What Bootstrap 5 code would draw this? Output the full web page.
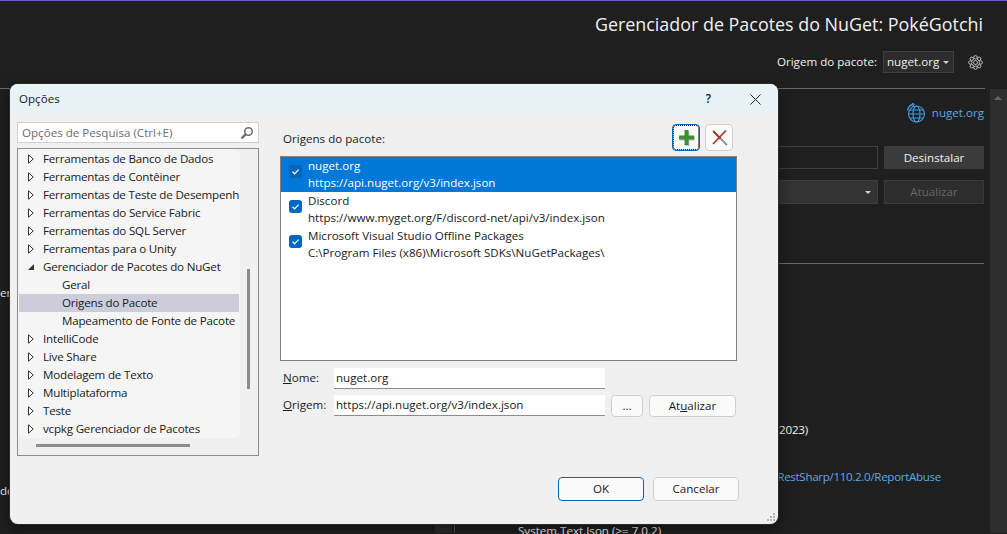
<!DOCTYPE html>
<html lang="pt-BR">
<head>
  <meta charset="UTF-8">
  <meta name="viewport" content="width=device-width, initial-scale=1">
  <title>Opções - Origens do Pacote</title>
  <link href="https://cdn.jsdelivr.net/npm/bootstrap@5.3.3/dist/css/bootstrap.min.css" rel="stylesheet">
  <style>
    html, body {
      height: 534px;
      overflow: hidden;
    }

    body {
      background-color: #1f1f1f;
      color: #f1f1f1;
      font-family: "Open Sans", "Liberation Sans", sans-serif;
      font-size: 11.6px;
      line-height: 18px;
      border-top: 1px solid #6a5ccf;
      position: relative;
    }

    /* fundo escuro do VS */
    .vs-header {
      height: 88px;
      border-bottom: 1px solid #6b6b6b;
      margin-right: 22px;
      padding-right: 2px;
    }

    .vs-title {
      font-size: 17.9px;
      line-height: 24px;
      padding-top: 11px;
      height: 50px;
    }

    .vs-origin-select {
      width: 71px;
      height: 22px;
      padding: 0 0 0 3px;
      background-color: #2d2d2d;
      border: 1px solid #3e3e3e;
      margin-left: 6px;
      margin-right: 14px;
    }

    .vs-caret {
      width: 0;
      height: 0;
      border-left: 3px solid transparent;
      border-right: 3px solid transparent;
      border-top: 3px solid #d0d0d0;
    }

    .vs-main {
      height: 444px;
    }

    .vs-left {
      width: 454px;
      flex: none;
    }

    .vs-left-top {
      height: 196px;
      padding-top: 195px;
    }

    .vs-left-mid {
      padding-top: 197px;
      height: 216px;
    }

    .vs-splitter {
      width: 17px;
      height: 32px;
      background-color: #2b2b2b;
      margin-left: 435px;
    }

    .vs-pane {
      flex: 1 1 auto;
      border-left: 1px solid #555;
      padding-right: 6px;
      height: 444px;
    }

    .vs-scroll {
      width: 17px;
      flex: none;
      background-color: #2e2e2e;
      position: relative;
    }

    .vs-scroll::before {
      content: "";
      position: absolute;
      top: 7px;
      left: 4px;
      border-left: 4px solid transparent;
      border-right: 4px solid transparent;
      border-bottom: 4px solid #666;
    }

    .vs-link {
      color: #5aa9e6;
    }

    .vs-pane-link {
      height: 18px;
      margin-top: 15px;
      gap: 6px;
    }

    .vs-row-a {
      margin-top: 24px;
      height: 23px;
      gap: 6px;
    }

    .vs-row-b {
      margin-top: 11px;
      height: 24px;
      gap: 6px;
    }

    .vs-box {
      flex: 1 1 auto;
      border: 1px solid #3e3e3e;
    }

    .vs-box-fill {
      background-color: #333;
      padding-right: 6px;
    }

    .vs-btn {
      width: 100px;
      flex: none;
      padding: 0;
      border-radius: 0;
      font-size: 11.6px;
      background-color: #3b3b3b;
      border: 0;
      color: #f1f1f1;
    }

    .vs-btn-off {
      background-color: #2d2d2d;
      border: 1px solid #383838;
      color: #666;
    }

    .vs-rule {
      border-top: 1px solid #6b6b6b;
      margin-top: 59px;
    }

    .vs-date {
      margin-top: 157px;
      padding-right: 176px;
      letter-spacing: -.2px;
    }

    .vs-report {
      margin-top: 29px;
      padding-right: 43px;
      letter-spacing: -.32px;
    }

    .vs-dep {
      margin-top: 36px;
      padding-left: 63px;
    }

    /* janela de opções */
    .dlg {
      position: absolute;
      left: 10px;
      top: 83px;
      width: 768px;
      height: 440px;
      background-color: #f0f0f0;
      color: #1a1a1a;
      border-radius: 8px;
      box-shadow: 0 0 0 1px #2a2a2a, 0 4px 14px rgba(0, 0, 0, .5);
      overflow: hidden;
    }

    .dlg-titlebar {
      height: 30px;
      background-color: #e8f3f7;
      padding: 0 17px 0 9px;
    }

    .dlg-help {
      margin-right: 39px;
      font-weight: 600;
    }

    .dlg-body {
      padding: 8px 41px 0 7px;
    }

    .dlg-left {
      width: 242px;
      flex: none;
    }

    .dlg-search {
      height: 21px;
      background-color: #fff;
      border: 1px solid #d0d0d0;
      padding: 0 4px;
      color: #6d6d6d;
    }

    .dlg-tree {
      height: 308px;
      margin-top: 5px;
      border: 1px solid #8c8c8c;
      background-color: #f0f0f0;
      position: relative;
    }

    .dlg-tree-list {
      width: 222px;
      height: 289px;
      background-color: #f5f5f5;
      overflow: hidden;
      padding: 1px 1px 0 1px;
      letter-spacing: -.2px;
    }

    .dlg-tree-item {
      height: 18px;
      flex: none;
      line-height: 18px;
      white-space: nowrap;
      overflow: hidden;
      padding: 0 0 1px 9px;
      gap: 5px;
    }

    .dlg-tree-sub {
      padding-left: 43px;
    }

    .dlg-tree-item.is-selected {
      background-color: #cbcdda;
    }

    .dlg-vbar {
      position: absolute;
      left: 229px;
      top: 120px;
      width: 3px;
      height: 120px;
      background-color: #8c8c8c;
    }

    .dlg-hbar {
      position: absolute;
      left: 18px;
      top: 295px;
      width: 154px;
      height: 3px;
      background-color: #8c8c8c;
    }

    .dlg-right {
      margin-left: 21px;
      flex: 1 1 auto;
    }

    .dlg-sources-head {
      height: 34px;
      padding-left: 3px;
    }

    .dlg-icon-btn {
      width: 28px;
      height: 27px;
      padding: 0;
      background-color: #fbfbfb;
      border: 1px solid #d0d0d0;
      border-radius: 4px;
    }

    .dlg-icon-btn.is-focus {
      border: 1px solid #0067c0;
      outline: 1px dotted #000;
      outline-offset: -2px;
    }

    .dlg-icons {
      gap: 5px;
      margin: 2px 4px 0 0;
    }

    .dlg-sources {
      height: 205px;
      background-color: #fff;
      border: 1px solid #7f7f7f;
      border-radius: 0;
    }

    .dlg-source {
      height: 35px;
      line-height: 17px;
      padding: 0 0 2px 8px;
      border: 0;
      border-radius: 0;
      gap: 6px;
      color: #1a1a1a;
      background: transparent;
    }

    .dlg-source.is-selected {
      background-color: #0078d7;
      color: #fff;
    }

    .dlg-check {
      width: 13px;
      height: 13px;
      flex: none;
      margin-bottom: 4px;
      background-color: #0067c0;
      border-radius: 3px;
    }

    .dlg-source.is-selected .dlg-check {
      background-color: #0a65b8;
    }

    .dlg-field {
      height: 21px;
      margin-top: 6px;
      padding-left: 3px;
    }

    .dlg-field-first {
      margin-top: 7px;
    }

    .dlg-label {
      width: 51px;
      flex: none;
      margin-bottom: 1px;
    }

    .dlg-input {
      width: 271px;
      height: 21px;
      flex: none;
      padding: 0 2px 2px;
      font-size: 11.6px;
      line-height: 18px;
      background-color: #fff;
      border: 0;
      border-bottom: 1px solid #8c8c8c;
      border-radius: 0;
      color: #1a1a1a;
    }

    .dlg-btn {
      height: 22px;
      padding: 0;
      font-size: 11.6px;
      line-height: 18px;
      background-color: #fbfbfb;
      border: 1px solid #d0d0d0;
      border-radius: 4px;
      color: #1a1a1a;
    }

    .dlg-btn-dots {
      width: 32px;
      margin-left: 6px;
    }

    .dlg-btn-update {
      width: 87px;
      margin-left: 6px;
    }

    .dlg-footer {
      position: absolute;
      right: 39px;
      bottom: 23px;
      gap: 9px;
    }

    .dlg-btn-main {
      width: 86px;
      height: 24px;
    }

    .dlg-btn-ok {
      border-color: #0067c0;
    }

    .dlg-grip {
      position: absolute;
      right: 2px;
      bottom: 2px;
    }
  </style>
</head>
<body>

  <svg width="0" height="0" class="position-absolute">
    <symbol id="seta" viewBox="0 0 6 10">
      <path d="M.5.8 5.2 5 .5 9.2Z" fill="#fff" stroke="#333" stroke-width="1"/>
    </symbol>
    <symbol id="visto" viewBox="0 0 13 13">
      <path d="M3.500 6.800 5.600 8.800 9.600 4.600" fill="none" stroke="#fff" stroke-width="1.200"/>
    </symbol>
  </svg>

  <!-- Fundo: gerenciador de pacotes -->
  <header class="vs-header">
    <div class="vs-title text-end">Gerenciador de Pacotes do NuGet: PokéGotchi</div>
    <div class="d-flex justify-content-end align-items-center">
      <span>Origem do pacote:</span>
      <span class="vs-origin-select d-flex align-items-center justify-content-between">nuget.org<span class="vs-caret me-1"></span></span>
      <svg width="15" height="15" viewBox="0 0 15 15" fill="none" stroke="#c8c8c8" stroke-width=".9">
        <circle cx="7.500" cy="7.500" r="2"/>
        <circle cx="7.500" cy="2.300" r="1.700"/><circle cx="7.500" cy="12.700" r="1.700"/>
        <circle cx="2.300" cy="7.500" r="1.700"/><circle cx="12.700" cy="7.500" r="1.700"/>
        <circle cx="3.800" cy="3.800" r="1.700"/><circle cx="11.200" cy="3.800" r="1.700"/>
        <circle cx="3.800" cy="11.200" r="1.700"/><circle cx="11.200" cy="11.200" r="1.700"/>
      </svg>
    </div>
  </header>

  <main class="vs-main d-flex">
    <div class="vs-left">
      <div class="vs-left-top">en</div>
      <div class="vs-left-mid">do</div>
      <div class="vs-splitter"></div>
    </div>
    <div class="vs-pane">
      <div class="vs-pane-link d-flex justify-content-end align-items-center">
        <svg width="20" height="20" viewBox="0 0 20 20" fill="none" stroke="#3f9be0" stroke-width="1.100">
          <circle cx="10.500" cy="11" r="8"/>
          <ellipse cx="10.500" cy="11" rx="3.500" ry="8"/>
          <path d="M2.500 11h16M3.700 7h13.600M3.700 15h13.600"/>
          <path d="M1.500 7.500C2 4 4.500 1.800 7.500 1.500" stroke-width="1.300"/>
          <path d="M6 .2 8.500 1.500 6.500 3.500" stroke-width="1"/>
        </svg>
        <span class="vs-link">nuget.org</span>
      </div>
      <div class="vs-row-a d-flex">
        <div class="vs-box"></div>
        <button class="btn vs-btn" type="button">Desinstalar</button>
      </div>
      <div class="vs-row-b d-flex">
        <div class="vs-box vs-box-fill d-flex align-items-center justify-content-end"><span class="vs-caret"></span></div>
        <button class="btn vs-btn vs-btn-off" type="button">Atualizar</button>
      </div>
      <div class="vs-rule"></div>
      <div class="vs-date text-end">/2023)</div>
      <div class="vs-report text-end vs-link">RestSharp/110.2.0/ReportAbuse</div>
      <div class="vs-dep">System.Text.Json (&gt;= 7.0.2)</div>
    </div>
    <div class="vs-scroll"></div>
  </main>

  <!-- Janela Opções -->
  <div class="dlg">
    <div class="dlg-titlebar d-flex align-items-center">
      <span class="flex-grow-1">Opções</span>
      <span class="dlg-help">?</span>
      <svg width="11" height="11" viewBox="0 0 11 11" stroke="#222" stroke-width="1"><path d="M.5.500 10.500 10.500M10.500.500.500 10.500"/></svg>
    </div>

    <div class="dlg-body d-flex">
      <div class="dlg-left">
        <div class="dlg-search d-flex align-items-center justify-content-between">
          <span>Opções de Pesquisa (Ctrl+E)</span>
          <svg width="14" height="14" viewBox="0 0 14 14" fill="none" stroke="#6e6e6e"><circle cx="8.500" cy="5.500" r="3.700" stroke-width="1.600"/><path d="M5.800 8.200 1.500 12.500" stroke-width="2.400"/></svg>
        </div>
        <div class="dlg-tree">
          <div class="dlg-tree-list list-group">
            <div class="dlg-tree-item d-flex align-items-center"><svg width="6" height="10" class="flex-shrink-0"><use href="#seta"/></svg><span class="ms-1">Ferramentas de Banco de Dados</span></div>
            <div class="dlg-tree-item d-flex align-items-center"><svg width="6" height="10" class="flex-shrink-0"><use href="#seta"/></svg><span class="ms-1">Ferramentas de Contêiner</span></div>
            <div class="dlg-tree-item d-flex align-items-center"><svg width="6" height="10" class="flex-shrink-0"><use href="#seta"/></svg><span class="ms-1">Ferramentas de Teste de Desempenho</span></div>
            <div class="dlg-tree-item d-flex align-items-center"><svg width="6" height="10" class="flex-shrink-0"><use href="#seta"/></svg><span class="ms-1">Ferramentas do Service Fabric</span></div>
            <div class="dlg-tree-item d-flex align-items-center"><svg width="6" height="10" class="flex-shrink-0"><use href="#seta"/></svg><span class="ms-1">Ferramentas do SQL Server</span></div>
            <div class="dlg-tree-item d-flex align-items-center"><svg width="6" height="10" class="flex-shrink-0"><use href="#seta"/></svg><span class="ms-1">Ferramentas para o Unity</span></div>
            <div class="dlg-tree-item d-flex align-items-center"><svg width="6" height="10" viewBox="0 0 6 10" class="flex-shrink-0"><path d="M6 2v6H0Z" fill="#333"/></svg><span class="ms-1">Gerenciador de Pacotes do NuGet</span></div>
            <div class="dlg-tree-item dlg-tree-sub d-flex align-items-center">Geral</div>
            <div class="dlg-tree-item dlg-tree-sub is-selected d-flex align-items-center">Origens do Pacote</div>
            <div class="dlg-tree-item dlg-tree-sub d-flex align-items-center">Mapeamento de Fonte de Pacote</div>
            <div class="dlg-tree-item d-flex align-items-center"><svg width="6" height="10" class="flex-shrink-0"><use href="#seta"/></svg><span class="ms-1">IntelliCode</span></div>
            <div class="dlg-tree-item d-flex align-items-center"><svg width="6" height="10" class="flex-shrink-0"><use href="#seta"/></svg><span class="ms-1">Live Share</span></div>
            <div class="dlg-tree-item d-flex align-items-center"><svg width="6" height="10" class="flex-shrink-0"><use href="#seta"/></svg><span class="ms-1">Modelagem de Texto</span></div>
            <div class="dlg-tree-item d-flex align-items-center"><svg width="6" height="10" class="flex-shrink-0"><use href="#seta"/></svg><span class="ms-1">Multiplataforma</span></div>
            <div class="dlg-tree-item d-flex align-items-center"><svg width="6" height="10" class="flex-shrink-0"><use href="#seta"/></svg><span class="ms-1">Teste</span></div>
            <div class="dlg-tree-item d-flex align-items-center"><svg width="6" height="10" class="flex-shrink-0"><use href="#seta"/></svg><span class="ms-1">vcpkg Gerenciador de Pacotes</span></div>
          </div>
          <div class="dlg-vbar"></div>
          <div class="dlg-hbar"></div>
        </div>
      </div>

      <div class="dlg-right">
        <div class="dlg-sources-head d-flex justify-content-between align-items-start">
          <span class="mt-2">Origens do pacote:</span>
          <div class="dlg-icons d-flex">
            <button class="btn dlg-icon-btn is-focus d-flex align-items-center justify-content-center" type="button" aria-label="Adicionar">
              <svg width="17" height="17" viewBox="0 0 17 17"><path d="M7.500 2h4v5.500H17v4h-5.500V17h-4v-5.500H2v-4h5.500Z" fill="#bdbdbd"/><path d="M6.500 1h4v5.500H16v4h-5.500V16h-4v-5.500H1v-4h5.500Z" fill="#3a8f2f"/></svg>
            </button>
            <button class="btn dlg-icon-btn d-flex align-items-center justify-content-center" type="button" aria-label="Remover">
              <svg width="17" height="17" viewBox="0 0 17 17" fill="none"><path d="M3 3 16 16" stroke="#8f8f8f" stroke-width="1.800"/><path d="M15 1.500 2 15" stroke="#a93a26" stroke-width="1.800"/><path d="M2 2 9.500 9.500" stroke="#a93a26" stroke-width="1.800"/></svg>
            </button>
          </div>
        </div>
        <div class="dlg-sources list-group">
          <div class="dlg-source is-selected list-group-item d-flex align-items-center">
            <span class="dlg-check"><svg width="13" height="13" class="d-block"><use href="#visto"/></svg></span>
            <div>nuget.org<br>https://api.nuget.org/v3/index.json</div>
          </div>
          <div class="dlg-source list-group-item d-flex align-items-center">
            <span class="dlg-check"><svg width="13" height="13" class="d-block"><use href="#visto"/></svg></span>
            <div>Discord<br>https://www.myget.org/F/discord-net/api/v3/index.json</div>
          </div>
          <div class="dlg-source list-group-item d-flex align-items-center">
            <span class="dlg-check"><svg width="13" height="13" class="d-block"><use href="#visto"/></svg></span>
            <div>Microsoft Visual Studio Offline Packages<br>C:\Program Files (x86)\Microsoft SDKs\NuGetPackages\</div>
          </div>
        </div>
        <div class="dlg-field dlg-field-first d-flex align-items-center">
          <label class="dlg-label"><u>N</u>ome:</label>
          <input class="form-control dlg-input" type="text" value="nuget.org">
        </div>
        <div class="dlg-field d-flex align-items-center">
          <label class="dlg-label"><u>O</u>rigem:</label>
          <input class="form-control dlg-input" type="text" value="https://api.nuget.org/v3/index.json">
          <button class="btn dlg-btn dlg-btn-dots" type="button">...</button>
          <button class="btn dlg-btn dlg-btn-update" type="button">At<u>u</u>alizar</button>
        </div>
      </div>
    </div>

    <div class="dlg-footer d-flex">
      <button class="btn dlg-btn dlg-btn-main dlg-btn-ok" type="button">OK</button>
      <button class="btn dlg-btn dlg-btn-main" type="button">Cancelar</button>
    </div>
    <svg class="dlg-grip" width="10" height="10" viewBox="0 0 10 10" fill="#b5b5b5">
      <rect x="7" y="1" width="2" height="2"/><rect x="4" y="4" width="2" height="2"/><rect x="7" y="4" width="2" height="2"/><rect x="1" y="7" width="2" height="2"/><rect x="4" y="7" width="2" height="2"/><rect x="7" y="7" width="2" height="2"/>
    </svg>
  </div>

  <script src="https://cdn.jsdelivr.net/npm/bootstrap@5.3.3/dist/js/bootstrap.bundle.min.js"></script>
</body>
</html>
